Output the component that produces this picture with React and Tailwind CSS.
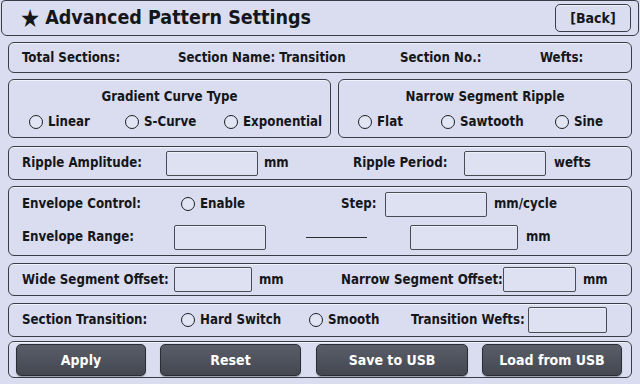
import { useState } from "react";

const font = { fontFamily: '"DejaVu Sans Condensed", "DejaVu Sans", Verdana, sans-serif' };

function Radio({ label, checked, onClick, className = "" }) {
    return (
        <button type="button" onClick={onClick} className={`flex items-center gap-[5px] ${className}`}>
            <span className="flex h-[14px] w-[14px] items-center justify-center rounded-full border-[1.5px] border-[#1e1f24] bg-[#e2e5f3]">
                {checked && <span className="h-[6px] w-[6px] rounded-full bg-[#1e1f24]" />}
            </span>
            <span>{label}</span>
        </button>
    );
}

function Field({ className = "" }) {
    return (
        <input
            className={`h-[25px] shrink-0 rounded-[2px] border border-[#4a4c55] bg-[#dde1f1] px-1 text-[13px] outline-none shadow-[inset_0_1px_0_rgba(255,255,255,0.5)] ${className}`}
        />
    );
}

function Panel({ className = "", children }) {
    return (
        <div className={`whitespace-nowrap rounded-[6px] border border-[#3a3c46] bg-[#d9ddef] shadow-[inset_0_1px_0_rgba(255,255,255,0.6)] ${className}`}>
            {children}
        </div>
    );
}

export default function App() {
    const [curve, setCurve] = useState("");
    const [ripple, setRipple] = useState("");
    const [envelope, setEnvelope] = useState(false);
    const [transition, setTransition] = useState("");

    return (
        <div style={font} className="h-[384px] w-[640px] overflow-hidden bg-[#d9ddef] text-[13.2px] font-bold text-[#15161a]">
            {/* Header */}
            <div className="mx-[1px] flex h-[36px] items-center justify-between rounded-b-[6px] rounded-t-[4px] border border-[#3a3c46] pl-[18px] pr-[7px]">
                <h1 className="flex items-center gap-[5px] text-[19.5px] font-bold">
                    <span className="text-[25px] leading-none">★</span>
                    <span>Advanced Pattern Settings</span>
                </h1>
                <button className="h-[28px] w-[76px] rounded-[5px] border-[1.5px] border-[#3a3c46] text-[14px] font-bold shadow-[inset_0_1px_0_rgba(255,255,255,0.6)]">
                    [Back]
                </button>
            </div>

            <div className="flex flex-col px-[8px] pt-[6px]">
                {/* Info row */}
                <Panel className="flex h-[31px] items-center pl-[13px]">
                    <span className="w-[156px]">Total Sections:</span>
                    <span className="w-[222px]">Section Name: Transition</span>
                    <span className="w-[140px]">Section No.:</span>
                    <span>Wefts:</span>
                </Panel>

                {/* Curve / ripple type */}
                <div className="mt-[6px] flex gap-[7px]">
                    <Panel className="flex h-[59px] w-[323px] flex-col items-center pt-[7px]">
                        <div>Gradient Curve Type</div>
                        <div className="mt-[5px] flex w-full pl-[20px]">
                            <Radio className="w-[96px]" label="Linear" checked={curve === "linear"} onClick={() => setCurve("linear")} />
                            <Radio className="w-[99px]" label="S-Curve" checked={curve === "s"} onClick={() => setCurve("s")} />
                            <Radio label="Exponential" checked={curve === "exp"} onClick={() => setCurve("exp")} />
                        </div>
                    </Panel>
                    <Panel className="flex h-[59px] flex-1 flex-col items-center pt-[7px]">
                        <div>Narrow Segment Ripple</div>
                        <div className="mt-[5px] flex w-full pl-[19px]">
                            <Radio className="w-[83px]" label="Flat" checked={ripple === "flat"} onClick={() => setRipple("flat")} />
                            <Radio className="w-[114px]" label="Sawtooth" checked={ripple === "saw"} onClick={() => setRipple("saw")} />
                            <Radio label="Sine" checked={ripple === "sine"} onClick={() => setRipple("sine")} />
                        </div>
                    </Panel>
                </div>

                {/* Ripple amplitude / period */}
                <Panel className="mt-[8px] flex h-[34px] items-center pl-[13px]">
                    <span className="w-[144px]">Ripple Amplitude:</span>
                    <Field className="w-[92px]" />
                    <span className="ml-[6px] w-[89px]">mm</span>
                    <span className="w-[111px]">Ripple Period:</span>
                    <Field className="w-[82px]" />
                    <span className="ml-[8px]">wefts</span>
                </Panel>

                {/* Envelope */}
                <Panel className="mt-[6px] flex h-[70px] flex-col gap-[9px] pl-[13px] pt-[5px]">
                    <div className="flex h-[24px] items-center">
                        <span className="w-[159px]">Envelope Control:</span>
                        <Radio className="w-[160px]" label="Enable" checked={envelope} onClick={() => setEnvelope(!envelope)} />
                        <span className="w-[44px]">Step:</span>
                        <Field className="h-[24px] w-[102px]" />
                        <span className="ml-[7px]">mm/cycle</span>
                    </div>
                    <div className="flex h-[24px] items-center">
                        <span className="w-[152px]">Envelope Range:</span>
                        <Field className="h-[24px] w-[92px]" />
                        <span className="ml-[40px] h-[1px] w-[61px] bg-[#2a2b30]" />
                        <Field className="ml-[43px] h-[24px] w-[108px]" />
                        <span className="ml-[8px]">mm</span>
                    </div>
                </Panel>

                {/* Offsets */}
                <Panel className="mt-[7px] flex h-[33px] items-center pl-[13px]">
                    <span className="w-[152px] shrink-0">Wide Segment Offset:</span>
                    <Field className="w-[78px]" />
                    <span className="ml-[7px] w-[82px] shrink-0">mm</span>
                    <span className="w-[162px] shrink-0">Narrow Segment Offset:</span>
                    <Field className="w-[73px]" />
                    <span className="ml-[7px]">mm</span>
                </Panel>

                {/* Section transition */}
                <Panel className="mt-[7px] flex h-[34px] items-center pl-[13px]">
                    <span className="w-[159px]">Section Transition:</span>
                    <Radio className="w-[128px]" label="Hard Switch" checked={transition === "hard"} onClick={() => setTransition("hard")} />
                    <Radio className="w-[102px]" label="Smooth" checked={transition === "smooth"} onClick={() => setTransition("smooth")} />
                    <span className="w-[117px]">Transition Wefts:</span>
                    <Field className="h-[26px] w-[79px]" />
                </Panel>

                {/* Actions */}
                <Panel className="mt-[4px] flex h-[37px] items-start pl-[7px] pt-[2px]">
                    {[
                        ["Apply", "w-[130px]", ""],
                        ["Reset", "w-[141px]", "ml-[14px]"],
                        ["Save to USB", "w-[152px]", "ml-[15px]"],
                        ["Load from USB", "w-[140px]", "ml-[14px]"],
                    ].map(([label, w, ml]) => (
                        <button
                            key={label}
                            className={`${w} ${ml} h-[32px] rounded-[5px] border border-[#2b2d34] bg-gradient-to-b from-[#5a5e69] to-[#444750] text-[14px] font-bold text-white shadow-[0_1px_1px_rgba(0,0,0,0.3)]`}
                        >
                            {label}
                        </button>
                    ))}
                </Panel>
            </div>
        </div>
    );
}
